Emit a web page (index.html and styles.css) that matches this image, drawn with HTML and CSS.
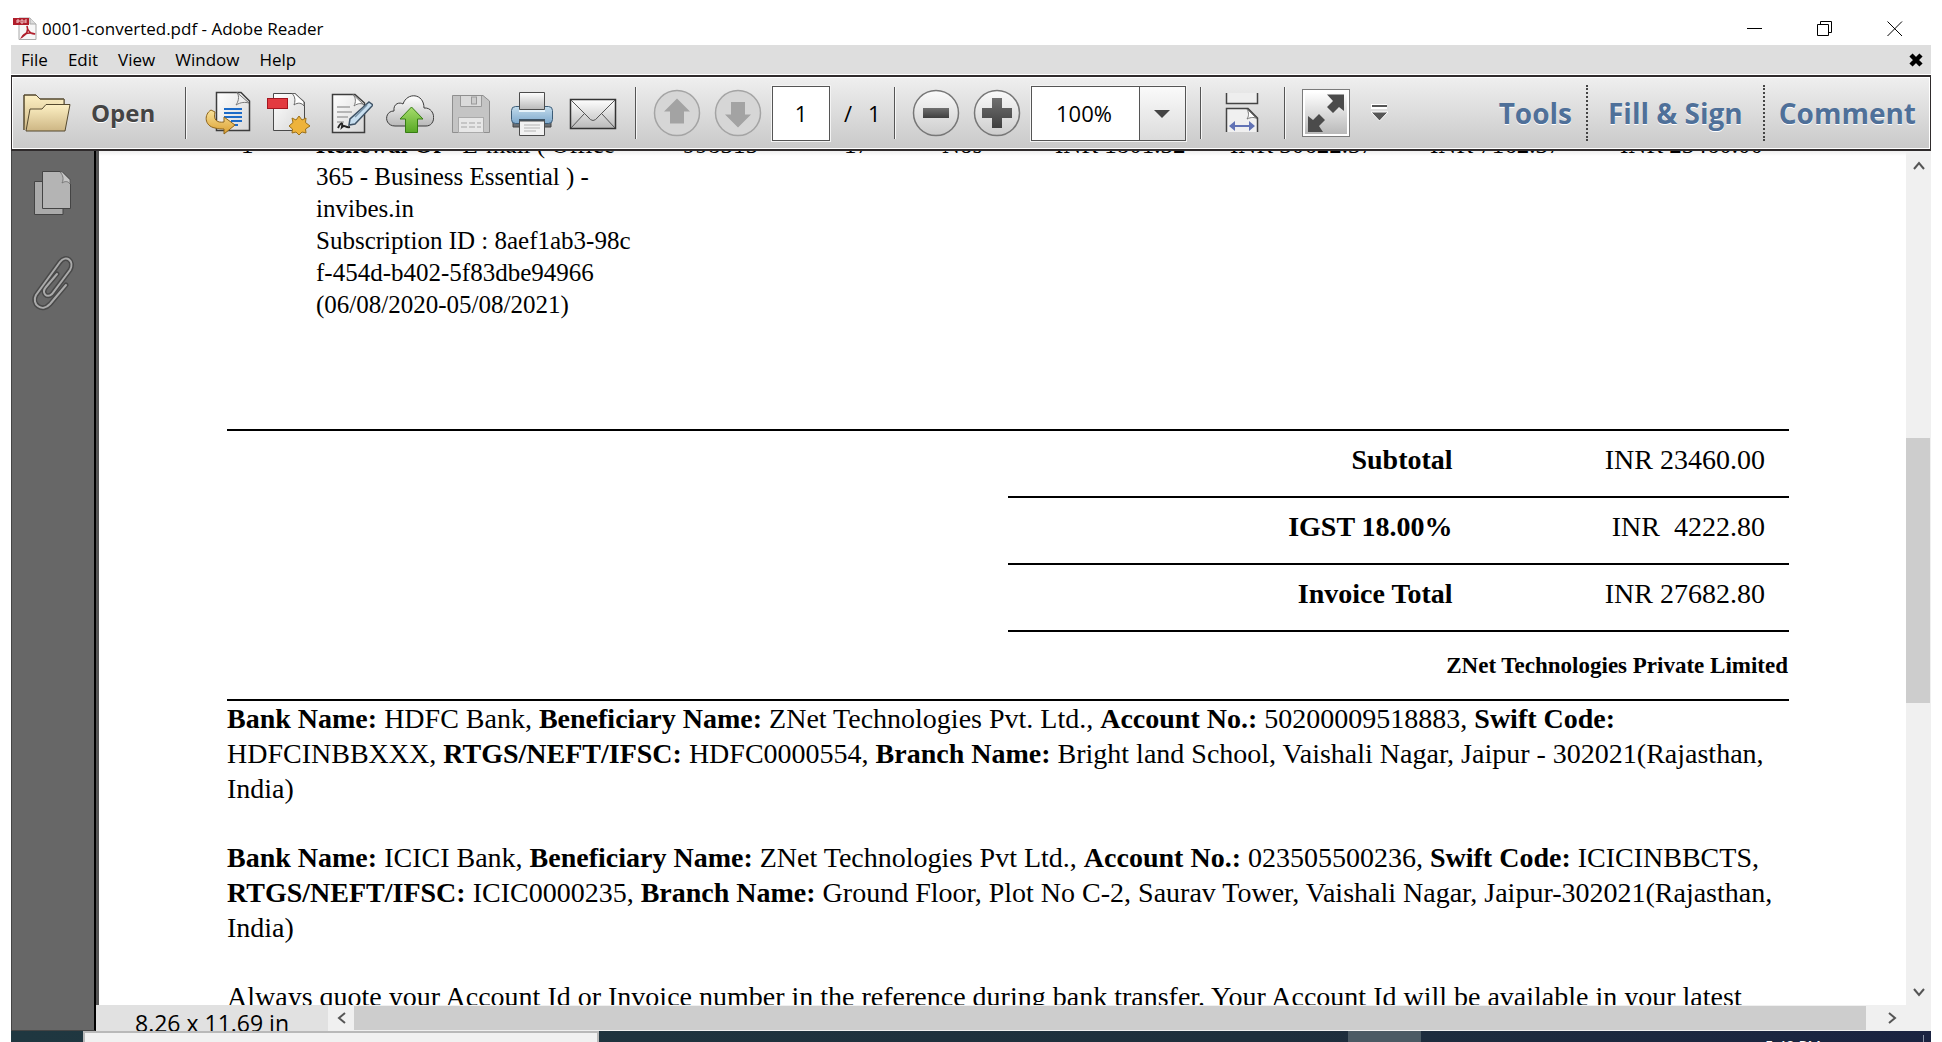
FILE: index.html
```html
<!DOCTYPE html>
<html lang="en">
<head>
<meta charset="utf-8">
<title>0001-converted.pdf - Adobe Reader</title>
<link rel="stylesheet" href="styles.css">
</head>
<body>
<svg class="defs" width="0" height="0" aria-hidden="true">
  <defs>
    <linearGradient id="gold" x1="0" y1="0" x2="0" y2="1"><stop offset="0" stop-color="#fdf0c4"/><stop offset="1" stop-color="#cdb684"/></linearGradient>
    <linearGradient id="paper" x1="0" y1="0" x2="1" y2="1"><stop offset="0" stop-color="#ffffff"/><stop offset="1" stop-color="#d6d6d6"/></linearGradient>
    <linearGradient id="silver" x1="0" y1="0" x2="0" y2="1"><stop offset="0" stop-color="#ffffff"/><stop offset="1" stop-color="#b9b9b9"/></linearGradient>
    <linearGradient id="green" x1="0" y1="0" x2="0" y2="1"><stop offset="0" stop-color="#a6dd6c"/><stop offset="1" stop-color="#58a825"/></linearGradient>
    <linearGradient id="arrowgold" x1="0" y1="0" x2="0" y2="1"><stop offset="0" stop-color="#f9e39b"/><stop offset="1" stop-color="#dba031"/></linearGradient>
    <linearGradient id="blue" x1="0" y1="0" x2="0" y2="1"><stop offset="0" stop-color="#c3dcec"/><stop offset="1" stop-color="#7ea9cd"/></linearGradient>
    <linearGradient id="knob" x1="0" y1="0" x2="0" y2="1"><stop offset="0" stop-color="#fbfbfb"/><stop offset="1" stop-color="#cccccc"/></linearGradient>
    <linearGradient id="dark" x1="0" y1="0" x2="0" y2="1"><stop offset="0" stop-color="#707070"/><stop offset="1" stop-color="#3f3f3f"/></linearGradient>
  </defs>
</svg>
<div class="window">
  <header class="titlebar">
    <svg class="app-icon" viewBox="0 0 24 24" width="24" height="24">
      <path d="M6 1H17L23 7V22.500H6Z" fill="#f7f7f7" stroke="#a9a9a9"/>
      <path d="M17 1V7H23" fill="#ddd" stroke="#a9a9a9"/>
      <rect x="0" y="1" width="16" height="7" fill="#b01e2b"/>
      <path d="M4 6V3H6V5H4M8 3V6H10V3ZM12 6V3H14M12 5H14" fill="none" stroke="#f3c8cb" stroke-width="1"/>
      <path d="M14 9C15.500 13 14 17 9 20C11 16 17 15 22 17C18 17.500 14 13 14 9Z" fill="none" stroke="#b01e2b" stroke-width="1.600"/>
    </svg>
    <h1 class="title">0001-converted.pdf - Adobe Reader</h1>
    <div class="window-controls">
      <button class="win-btn" type="button" aria-label="Minimize"><svg width="16" height="16" viewBox="0 0 16 16"><path d="M0 7.500H15" stroke="#000"/></svg></button>
      <button class="win-btn" type="button" aria-label="Restore"><svg width="16" height="16" viewBox="0 0 16 16"><path d="M.500 3.500H11.500V14.500H.500ZM3.500 3.500V.500H14.500V11.500H11.500" fill="none" stroke="#000"/></svg></button>
      <button class="win-btn" type="button" aria-label="Close"><svg width="16" height="16" viewBox="0 0 16 16"><path d="M.500 .500L15 15M15 .500L.500 15" stroke="#000"/></svg></button>
    </div>
  </header>

  <nav class="menubar" aria-label="Menu">
    <button type="button">File</button><button type="button">Edit</button><button type="button">View</button><button type="button">Window</button><button type="button">Help</button>
    <button class="close-doc" type="button" aria-label="Close document"><svg width="14" height="14" viewBox="0 0 14 14"><path d="M2 2L12 12M12 2L2 12" stroke="#000" stroke-width="4.500"/></svg></button>
  </nav>

  <div class="toolbar">
    <button class="open-btn" type="button">
      <svg width="48" height="40" viewBox="0 0 48 40"><path d="M1 37V2H13L17 6H41V14" fill="url(#gold)" stroke="#55492f"/><path d="M41 6V20H3L1 37Z" fill="url(#gold)"/><path d="M1 37V2H13L17 6H41V13" fill="none" stroke="#55492f"/><path d="M3 38L7 16H19L23 11.500H47L42 38Z" fill="url(#gold)" stroke="#55492f"/></svg>
      <span>Open</span>
    </button>
    <div class="group wide">
      <button class="tool" type="button" aria-label="Convert PDF"><svg width="48" height="48" viewBox="0 0 48 48"><path d="M13.500 3.500H38L46.500 12V41.500H13.500Z" fill="url(#paper)" stroke="#3d3d3d" stroke-width="1.500"/><path d="M34 3.500C37 8 35 13 33 16C38 13 42 13 46 14Z" fill="#eee" stroke="#777"/><path d="M21 20H39M21 24H39M21 28H39M28 32H39M30 36H35" stroke="#1c6bc8" stroke-width="2"/><path d="M8 21C1 25 1 37 12 39C15 40 19 40 21 40V45L32 36L21 28V33C14 34 10 31 12 23Z" fill="url(#arrowgold)" stroke="#8d641b"/></svg></button>
      <button class="tool" type="button" aria-label="Create PDF"><svg width="48" height="48" viewBox="0 0 48 48"><path d="M9.500 4.500H31L40.500 13V41.500H9.500Z" fill="url(#paper)" stroke="#4a4a4a"/><path d="M28 4.500C32 8 31 13 30 16C34 13 38 14 40 17V13L31 4.500Z" fill="#fff" stroke="#666"/><rect x="3.500" y="9.500" width="20" height="10" fill="#e33a40" stroke="#a51620"/><path d="M35 27L38 31L42 29L41.500 33.500L46 37L41.500 40L42 44L38 43L35 46L32 43L28 44L28.500 40L25 37L29 33.500L28 29L32 31Z" fill="#eeb33b" stroke="#9b7019"/></svg></button>
      <button class="tool" type="button" aria-label="Sign"><svg width="48" height="48" viewBox="0 0 48 48"><path d="M7.500 5.500H30L39.500 14V43.500H7.500Z" fill="url(#paper)" stroke="#3d3d3d" stroke-width="1.500"/><path d="M28 5.500C31 9 31 13 29 17C33 14 37 14 39 16Z" fill="#fff" stroke="#777"/><path d="M12 18H25M12 23H27M12 28H23M12 33H19" stroke="#b5b5b5" stroke-width="2"/><path d="M44 13L48 16L30 35L24 36L25 30Z" fill="#c8dff0" stroke="#3f5366" stroke-width="1.500"/><path d="M30 28L42 16" stroke="#7893a9" stroke-width="1.500"/><path d="M13 39C16 33 18 33 17 38C20 35 20 39 25 38" fill="none" stroke="#222" stroke-width="2"/></svg></button>
      <button class="tool" type="button" aria-label="Upload"><svg width="48" height="48" viewBox="0 0 48 48"><path d="M9 37C-2 37-2 22 8 22C7 14 14 13 17 15C21 3 38 4 38 19C50 18 51 37 40 37Z" fill="url(#silver)" stroke="#3c3c3c"/><path d="M25.500 18L37 30H31.500V43.500H19.500V30H14Z" fill="url(#green)" stroke="#367d13"/></svg></button>
      <button class="tool" type="button" aria-label="Save" disabled><svg width="48" height="48" viewBox="0 0 48 48"><path d="M5.500 6.500H36L42.500 12V43.500H5.500Z" fill="#c4c4c4" stroke="#8f8f8f"/><path d="M13.500 7V17.500H34.500V7" fill="#dadada" stroke="#999"/><rect x="24.500" y="8" width="5" height="7" fill="#ccc" stroke="#999"/><rect x="11.500" y="28.500" width="25" height="15" fill="#e7e7e7" stroke="#aaa"/><path d="M14 34H34M14 38H34" stroke="#c6c6c6" stroke-width="2" stroke-dasharray="6 2"/></svg></button>
      <button class="tool" type="button" aria-label="Print"><svg width="48" height="48" viewBox="0 0 48 48"><path d="M5 33H43V38H5Z" fill="#6b6f73" stroke="#444"/><rect x="3.500" y="17.500" width="41" height="17" rx="4" fill="url(#blue)" stroke="#3c5c77"/><path d="M11.500 20.500V3.500H36.500V20.500Z" fill="url(#silver)" stroke="#4c4c4c"/><path d="M11 22H37" stroke="#e7f3fa" stroke-width="2"/><path d="M11 31H37" stroke="#3d5365" stroke-width="2"/><path d="M11.500 32V46.500H36.500V32Z" fill="#f2f2f2" stroke="#4c4c4c"/><path d="M16 36H32M16 39H32M16 42H28" stroke="#b4b4b4"/></svg></button>
      <button class="tool" type="button" aria-label="Email"><svg width="48" height="48" viewBox="0 0 48 48"><rect x="1.500" y="10.500" width="45" height="29" fill="url(#silver)" stroke="#333" stroke-width="1.500"/><path d="M2 39L15 25M46 39L33 25M2 11L19 28Q24 35 29 28L46 11" fill="none" stroke="#555"/></svg></button>
    </div>
    <div class="group">
      <button class="tool" type="button" aria-label="Previous page" disabled><svg width="48" height="48" viewBox="0 0 48 48"><circle cx="24" cy="24" r="22.500" fill="#d6d6d6" stroke="#a4a4a4" stroke-width="1.500"/><path d="M24 9.500L37 22.500H31V34.500H17V22.500H11Z" fill="#a3a3a3"/></svg></button>
      <button class="tool" type="button" aria-label="Next page" disabled><svg width="48" height="48" viewBox="0 0 48 48"><circle cx="24" cy="24" r="22.500" fill="#d6d6d6" stroke="#a4a4a4" stroke-width="1.500"/><path d="M24 38.500L37 25.500H31V13H17V25.500H11Z" fill="#a3a3a3"/></svg></button>
      <input class="page-input" type="text" value="1" aria-label="Page number">
      <span class="page-count"><span>/</span><span>1</span></span>
    </div>
    <div class="group">
      <button class="tool" type="button" aria-label="Zoom out"><svg width="48" height="48" viewBox="0 0 48 48"><circle cx="24" cy="24" r="22.500" fill="url(#knob)" stroke="#777" stroke-width="1.500"/><path d="M11 19H37V29H11Z" fill="url(#dark)"/></svg></button>
      <button class="tool" type="button" aria-label="Zoom in"><svg width="48" height="48" viewBox="0 0 48 48"><circle cx="24" cy="24" r="22.500" fill="url(#knob)" stroke="#777" stroke-width="1.500"/><path d="M19 9H29V19H39V29H29V39H19V29H9V19H19Z" fill="url(#dark)"/></svg></button>
      <div class="zoom">
        <select aria-label="Zoom level"><option>100%</option></select>
        <svg class="zoom-arrow" width="16" height="8" viewBox="0 0 16 8"><path d="M0 0H16L8 8Z" fill="#444"/></svg>
      </div>
    </div>
    <div class="group wide">
      <button class="tool" type="button" aria-label="Fit width"><svg width="48" height="48" viewBox="0 0 48 48"><path d="M8.500 4V14.500H39.500V4" fill="#eee" stroke="#444" stroke-width="1.500"/><path d="M8.500 43V19.500H30L39.500 29V43" fill="#f0f0f0" stroke="#444" stroke-width="1.500"/><path d="M29 20C31 24 31 27 29 30C33 28 37 28 39 30Z" fill="#fff" stroke="#777"/><path d="M11 37L17 32V36H31V32L37 37L31 42V38H17V42Z" fill="#6273b5"/></svg></button>
    </div>
    <div class="group">
      <button class="tool" type="button" aria-label="Full screen"><svg width="48" height="48" viewBox="0 0 48 48"><rect x=".500" y=".500" width="47" height="47" fill="#fff" stroke="#7b7b7b"/><rect x="3" y="3" width="42" height="42" fill="url(#silver)"/><path d="M25 5.500H42V22L37 18L31 24L25 18L31 12Z" fill="#4b4b4b"/><path d="M6 27L11 31L17 25L23 31L17 37L21 43H6Z" fill="#4b4b4b"/></svg></button>
      <button class="tool narrow" type="button" aria-label="More tools"><svg width="20" height="18" viewBox="0 0 20 18"><path d="M1 2.500H17" stroke="#fff" stroke-width="5"/><path d="M2 2H17" stroke="#555" stroke-width="2"/><path d="M1 8H18L9.500 17Z" fill="#555" stroke="#fff"/></svg></button>
    </div>
    <div class="panes">
      <button type="button">Tools</button><button class="fill" type="button">Fill &amp; Sign</button><button type="button">Comment</button>
    </div>
  </div>

  <main class="workspace">
    <aside class="sidebar">
      <button type="button" aria-label="Page thumbnails"><svg width="40" height="46" viewBox="0 0 40 46"><path d="M1.500 11.500H30V44.500H1.500Z" fill="#aaa" stroke="#444"/><path d="M9.500 1.500H29L37.500 10V38.500H9.500Z" fill="#b4b4b4" stroke="#444"/><path d="M27 2C30 5 31 9 29 13C32 11 35 11 37 14V10L29 2Z" fill="#c6c6c6" stroke="#777"/></svg></button>
      <button type="button" aria-label="Attachments"><svg width="42" height="56" viewBox="0 -1 42 56"><g fill="none" stroke-linecap="round"><path id="clip" d="M34 29L18 48C10 57-1 48 4 39L28 6C34-2 43 5 38 14L20 38C15 43 9 37 14 31L25 18" stroke="#494949" stroke-width="5"/><path d="M34 29L18 48C10 57-1 48 4 39L28 6C34-2 43 5 38 14L20 38C15 43 9 37 14 31L25 18" stroke="#aaa" stroke-width="2"/></g></svg></button>
    </aside>
    <div class="viewer">
      <div class="view-row">
        <article class="page">
          <table class="items">
            <colgroup><col class="c-no"><col><col class="c-sac"><col class="c-qty"><col class="c-unit"><col class="c-rate"><col class="c-gross"><col class="c-disc"><col class="c-amount"></colgroup>
            <tbody><tr>
              <td class="num">1</td>
              <td><b>Renewal Of -</b> E-mail ( Office<br>365 - Business Essential ) -<br>invibes.in<br>Subscription ID : 8aef1ab3-98c<br>f-454d-b402-5f83dbe94966<br>(06/08/2020-05/08/2021)</td>
              <td>998315</td><td>17</td><td>Nos</td><td>INR 1801.32</td><td>INR 30622.37</td><td>INR 7162.37</td><td>INR 23460.00</td>
            </tr></tbody>
          </table>
          <table class="totals">
            <tbody>
              <tr><th scope="row">Subtotal</th><td>INR 23460.00</td></tr>
              <tr><th scope="row">IGST 18.00%</th><td>INR&nbsp; 4222.80</td></tr>
              <tr><th scope="row">Invoice Total</th><td>INR 27682.80</td></tr>
            </tbody>
          </table>
          <p class="company">ZNet Technologies Private Limited</p>
          <div class="bank">
            <p><b>Bank Name:</b> HDFC Bank, <b>Beneficiary Name:</b> ZNet Technologies Pvt. Ltd., <b>Account No.:</b> 50200009518883, <b>Swift Code:</b><br>HDFCINBBXXX, <b>RTGS/NEFT/IFSC:</b> HDFC0000554, <b>Branch Name:</b> Bright land School, Vaishali Nagar, Jaipur - 302021(Rajasthan,<br>India)</p>
            <p><b>Bank Name:</b> ICICI Bank, <b>Beneficiary Name:</b> ZNet Technologies Pvt Ltd., <b>Account No.:</b> 023505500236, <b>Swift Code:</b> ICICINBBCTS,<br><b>RTGS/NEFT/IFSC:</b> ICIC0000235, <b>Branch Name:</b> Ground Floor, Plot No C-2, Saurav Tower, Vaishali Nagar, Jaipur-302021(Rajasthan,<br>India)</p>
            <p>Always quote your Account Id or Invoice number in the reference during bank transfer. Your Account Id will be available in your latest</p>
          </div>
        </article>
        <div class="vscroll">
          <svg width="12" height="9" viewBox="0 0 12 9"><path d="M1 8L6 2L11 8" fill="none" stroke="#555" stroke-width="2"/></svg>
          <div class="vtrack"><div class="vthumb"></div></div>
          <svg width="12" height="9" viewBox="0 0 12 9"><path d="M1 1L6 7L11 1" fill="none" stroke="#555" stroke-width="2"/></svg>
        </div>
      </div>
      <div class="status-row">
        <span class="page-size">8.26 x 11.69 in</span>
        <span class="harrow"><svg width="9" height="12" viewBox="0 0 9 12"><path d="M8 1L2 6L8 11" fill="none" stroke="#555" stroke-width="2"/></svg></span>
        <div class="hthumb"></div>
        <span class="harrow end"><svg width="9" height="12" viewBox="0 0 9 12"><path d="M1 1L7 6L1 11" fill="none" stroke="#555" stroke-width="2"/></svg></span>
      </div>
    </div>
  </main>

  <footer class="taskbar">
    <div class="task-search"></div>
    <div class="task-active"></div>
    <span class="clock">5:40 PM</span>
  </footer>
</div>
</body>
</html>
```
FILE: styles.css
```css
* { box-sizing: border-box; }
body { margin: 0; background: #fff; font-family: "Open Sans", "Noto Sans", sans-serif; color: #000; }
button { border: 0; padding: 0; margin: 0; background: none; font: inherit; color: inherit; }
h1, p { margin: 0; }
svg { display: block; flex: none; }
.defs { position: absolute; }

.window { display: flex; flex-direction: column; height: 100vh; padding: 0 11px; overflow: hidden; }

.titlebar { display: flex; align-items: center; height: 45px; flex: none; padding: 12px 0 0 2px; }
.title { margin-left: 5px; font-size: 17px; line-height: 24px; font-weight: 400; flex: 1; white-space: nowrap; }
.window-controls { display: flex; align-items: center; gap: 54px; padding-right: 28px; }

.menubar { display: flex; align-items: center; gap: 20px; flex: none; height: 30px; padding: 0 8px 0 10px; background: #dedede; border-bottom: 1px solid #fff; font-size: 17px; line-height: 24px; }
.close-doc { margin-left: auto; }

.toolbar { display: flex; align-items: center; flex: none; height: 76px; border: 2px solid #2f2b2c; border-width: 2px 1px; background: linear-gradient(#efefef, #c9c9c9); box-shadow: inset 0 0 0 1px #fff; white-space: nowrap; }
.open-btn { display: flex; align-items: center; gap: 20px; width: 173px; flex: none; padding-left: 11px; font-size: 24px; line-height: 32px; font-weight: 700; color: #444; text-shadow: 0 1px 0 #fff; }
.group { display: flex; align-items: center; height: 52px; padding: 0 10px; border-left: 1px solid #555; box-shadow: inset 1px 0 0 #f6f6f6; }
.group.wide { padding-right: 12px; }
.tool { display: flex; justify-content: center; align-items: center; width: 61px; flex: none; }
.tool.narrow { width: 48px; }
.page-input { width: 58px; height: 55px; margin-left: 4px; padding: 0; border: 1px solid #555; outline: 1px solid #f4f4f4; background: #fff; text-align: center; font: 22px/30px "Open Sans", sans-serif; color: #000; flex: none; }
.page-count { display: flex; gap: 16px; width: 54px; padding-left: 14px; font-size: 22px; line-height: 30px; }
.zoom { position: relative; width: 155px; height: 55px; margin: 0 4px; flex: none; }
.zoom select { appearance: none; width: 100%; height: 100%; margin: 0; padding: 0 0 0 24px; border: 1px solid #555; outline: 1px solid #f4f4f4; border-radius: 0; background: linear-gradient(#555, #555) 107px 0 / 1px 100% no-repeat, linear-gradient(#fafafa, #dcdcdc) right / 46px 100% no-repeat, #fff; font: 22px/30px "Open Sans", sans-serif; color: #000; }
.zoom-arrow { position: absolute; right: 16px; top: 24px; pointer-events: none; }
.panes { display: flex; align-items: center; margin-left: auto; }
.panes button { height: 56px; padding: 0 14px; font-size: 28px; line-height: 36px; font-weight: 700; color: #4f7099; text-shadow: 0 1px 0 #fff; border-left: 2px dotted #444; }
.panes button:first-child { border-left: 0; }
.panes .fill { padding: 0 20px; }

.workspace { display: flex; flex: 1; min-height: 0; }
.sidebar { display: flex; flex-direction: column; align-items: center; gap: 39px; width: 85px; flex: none; padding-top: 19px; background: #676767; border: 1px solid #444; border-top: 0; border-right: 2px solid #000; }
.viewer { display: flex; flex-direction: column; flex: 1; min-width: 0; }
.view-row { display: flex; flex: 1; min-height: 0; }
.page { flex: 1; min-width: 0; overflow: hidden; border-left: 3px solid #555; padding: 0 117px 0 128px; background: linear-gradient(#eee, #fff 5px) #fff; font-family: "Liberation Serif", "Times New Roman", serif; white-space: nowrap; }

.items { width: 100%; margin-top: -22px; table-layout: fixed; border-collapse: collapse; font-size: 25px; line-height: 32px; }
.items td { height: 301px; padding: 0; vertical-align: top; text-align: left; border-bottom: 2px solid #000; }
.items .num { padding-left: 14px; }
.c-no { width: 89px; } .c-sac { width: 161px; } .c-qty { width: 98px; } .c-unit { width: 113px; }
.c-rate { width: 175px; } .c-gross { width: 200px; } .c-disc { width: 190px; } .c-amount { width: 169px; }

.totals { width: 50%; margin-left: auto; border-collapse: collapse; font-size: 28px; line-height: 32px; }
.totals th, .totals td { padding: 13px 24px 20px 0; text-align: right; border-bottom: 2px solid #000; }
.totals th { width: 60%; font-weight: 700; }

.company { padding: 18px 1px 17px 0; border-bottom: 2px solid #000; text-align: right; font-size: 23px; line-height: 32px; font-weight: 700; }
.bank { font-size: 28px; line-height: 35px; }
.bank p { margin-bottom: 34px; }

.vscroll { display: flex; flex-direction: column; align-items: center; width: 25px; flex: none; padding: 10px 0 8px; background: #f0f0f0; }
.vtrack { flex: 1; width: 100%; padding-right: 1px; display: flex; flex-direction: column; }
.vtrack::before { content: ""; flex: 268; }
.vtrack::after { content: ""; flex: 285; }
.vthumb { flex: 265; background: #cdcdcd; }

.status-row { display: flex; height: 26px; flex: none; background: #f0f0f0; }
.page-size { width: 232px; flex: none; padding: 4px 0 0 39px; background: #e1e1e1; font-size: 23px; line-height: 28px; overflow: hidden; white-space: nowrap; }
.harrow { display: flex; align-items: center; justify-content: center; width: 26px; flex: none; }
.harrow.end { width: 65px; padding-right: 13px; }
.hthumb { flex: 1; margin: 1px 0; background: #cdcdcd; }

.taskbar { display: flex; flex: none; height: 11px; background: linear-gradient(90deg, #1f3740, #1e2f3c 65%, #1a2341); overflow: hidden; }
.task-search { width: 516px; margin-left: 72px; flex: none; background: #f1f1f1; border: 2px solid #b9b9b9; border-bottom: 0; }
.task-active { width: 73px; margin-left: auto; margin-right: 344px; background: #4b5a64; }
.clock { width: 159px; margin: 4px 7px 0 0; border-right: 1px solid #8a93a5; font-size: 15px; line-height: 20px; color: #fff; flex: none; white-space: nowrap; }
```
